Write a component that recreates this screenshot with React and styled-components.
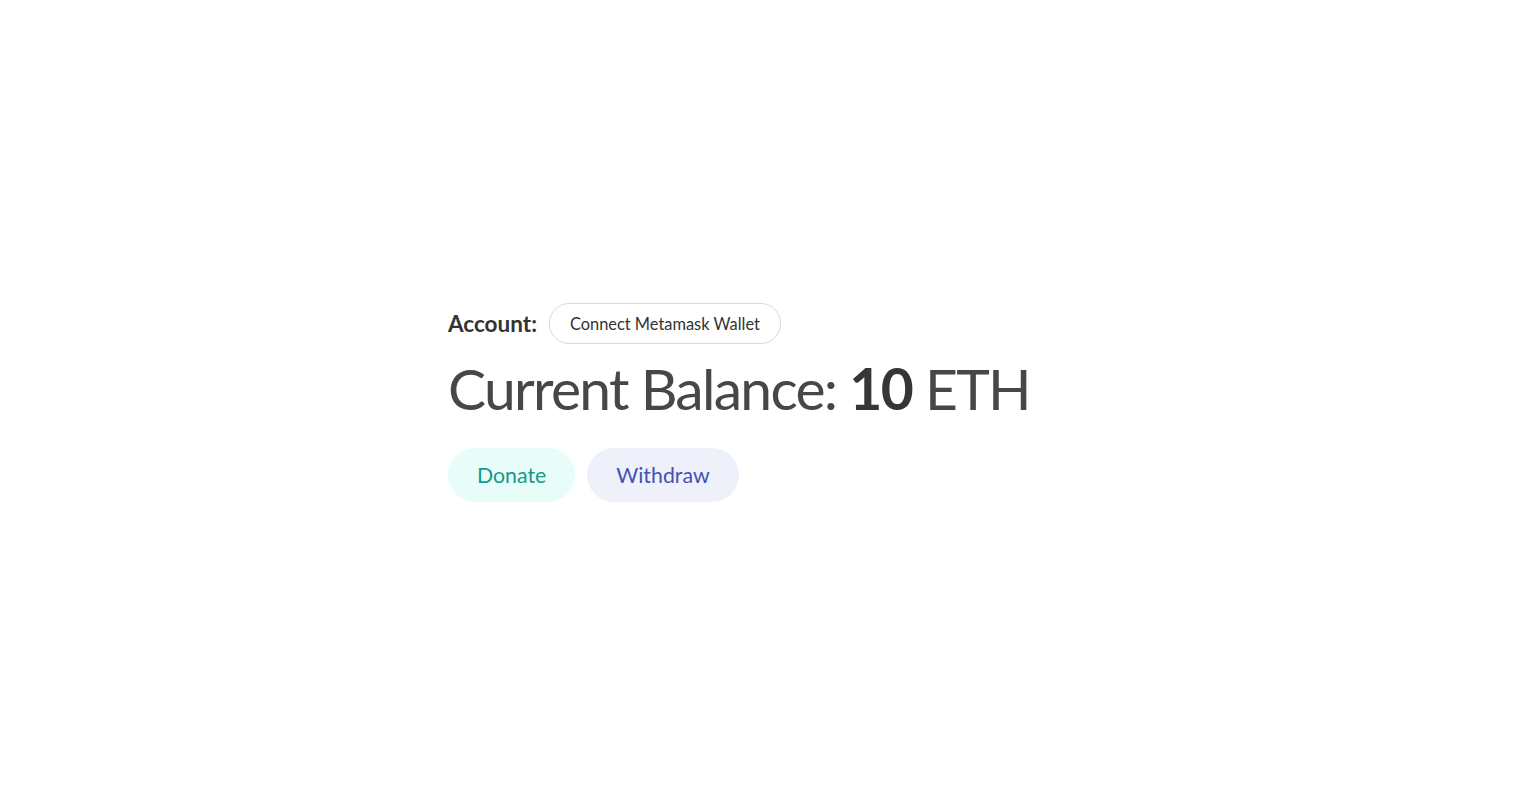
import React from 'react';
import styled, { createGlobalStyle } from 'styled-components';

const GlobalStyle = createGlobalStyle`
    body {
        margin: 0;
        background: #ffffff;
        font-family: Lato, "Noto Sans", sans-serif;
        color: #333333;
    }
`;

const Page = styled.div`
    min-height: 100vh;
    display: flex;
    align-items: center;
    justify-content: center;
`;

const Card = styled.div`
    width: 634px;
    display: flex;
    flex-direction: column;
    padding-top: 4px;
`;

const AccountRow = styled.div`
    display: flex;
    align-items: center;
    gap: 12px;
`;

const Label = styled.span`
    font-size: 22.5px;
    font-weight: 700;
    color: #333333;
`;

const ConnectButton = styled.button`
    font-family: inherit;
    font-size: 16.4px;
    color: #333333;
    background: #ffffff;
    border: 1px solid #d9d9d9;
    border-radius: 20px;
    height: 41px;
    padding: 0 20px;
    cursor: pointer;
`;

const Balance = styled.h1`
    margin: 6px 0 22px;
    font-size: 57px;
    font-weight: 400;
    line-height: 76px;
    letter-spacing: -1.7px;
    color: #474747;
    white-space: nowrap;

    b {
        font-weight: 700;
        color: #363636;
    }
`;

const Actions = styled.div`
    display: flex;
    gap: 12px;
    padding-bottom: 1px;
`;

const ActionButton = styled.button`
    font-family: inherit;
    font-size: 21.3px;
    height: 54px;
    padding: 0 29px;
    border: none;
    border-radius: 27px;
    background: ${props => props.bg};
    color: ${props => props.fg};
    cursor: pointer;
`;

const App = () => {
    return (
        <>
            <GlobalStyle />
            <Page>
                <Card>
                    <AccountRow>
                        <Label>Account:</Label>
                        <ConnectButton>Connect Metamask Wallet</ConnectButton>
                    </AccountRow>
                    <Balance>Current Balance: <b>10</b> ETH</Balance>
                    <Actions>
                        <ActionButton bg="#e8fdfa" fg="#159a88">Donate</ActionButton>
                        <ActionButton bg="#eef0fa" fg="#4450b5">Withdraw</ActionButton>
                    </Actions>
                </Card>
            </Page>
        </>
    );
};

export default App;
